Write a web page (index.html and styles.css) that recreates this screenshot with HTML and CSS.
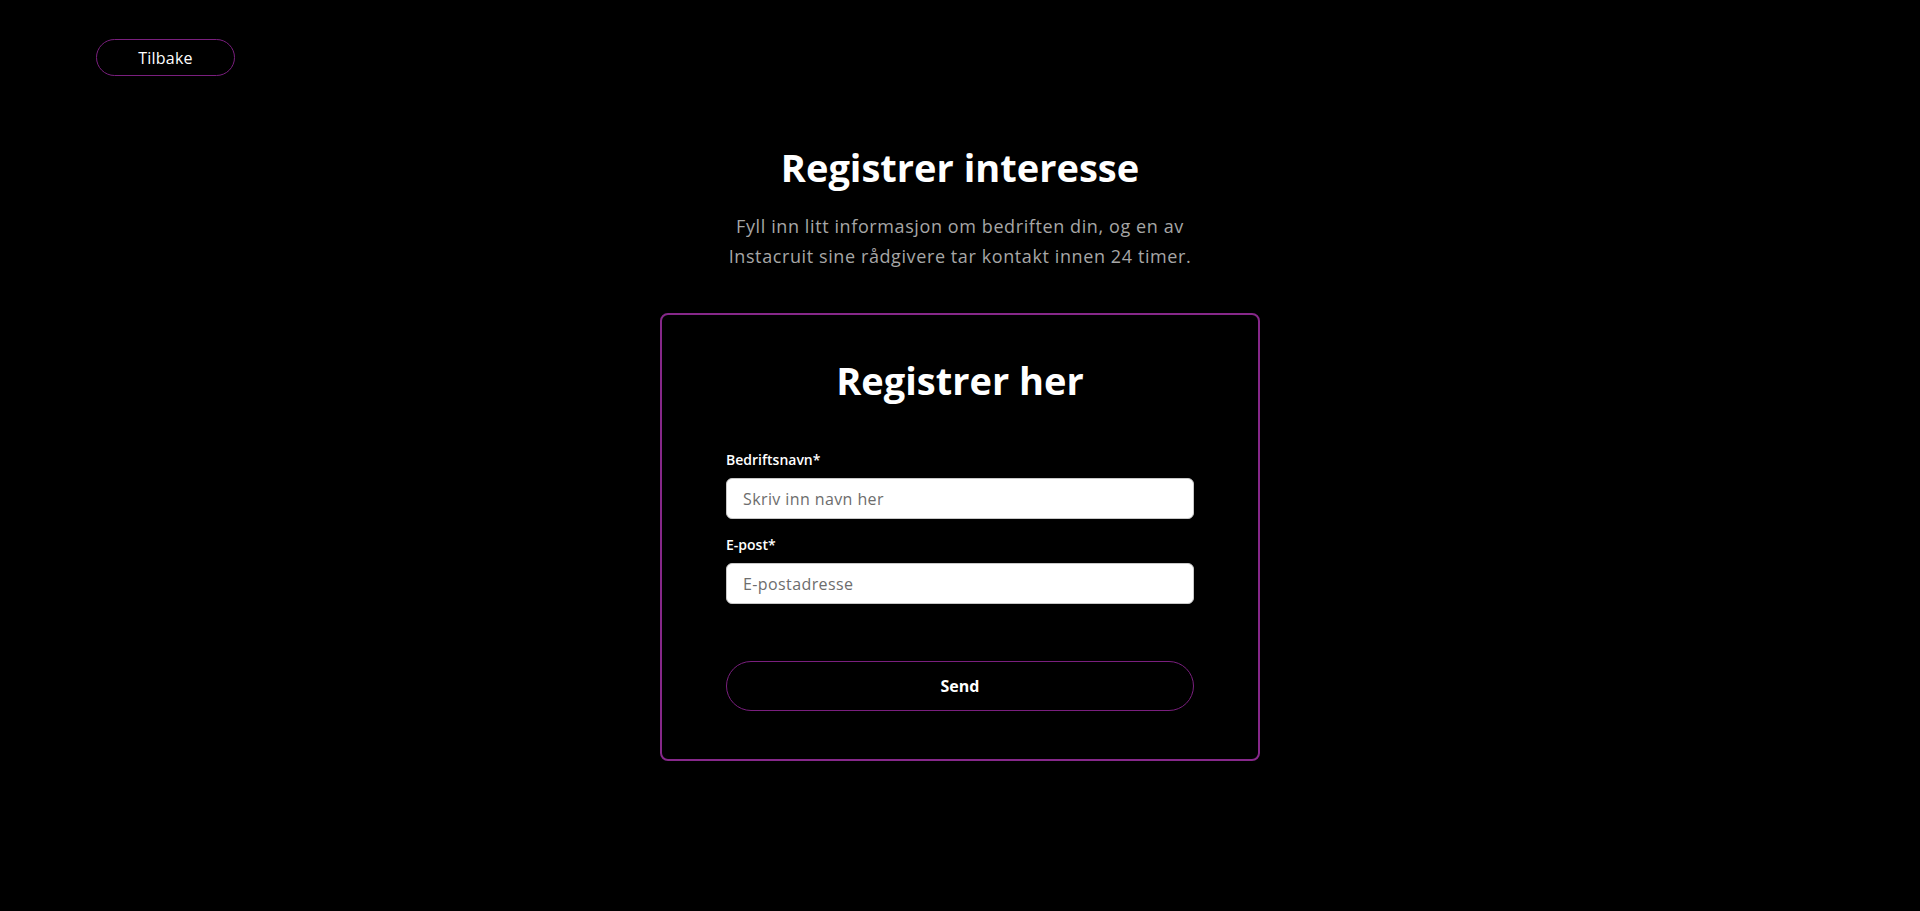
FILE: index.html
```html
<!DOCTYPE html>
<html lang="no">
<head>
  <meta charset="UTF-8">
  <title>Registrer interesse</title>
  <link rel="stylesheet" href="styles.css">
</head>
<body>
  <div class="topbar">
    <button class="back-btn" type="button">Tilbake</button>
  </div>

  <div class="intro">
    <h1>Registrer interesse</h1>
    <p>Fyll inn litt informasjon om bedriften din, og en av<br>Instacruit sine rådgivere tar kontakt innen 24 timer.</p>
  </div>

  <form class="card" onsubmit="return false;">
    <h2>Registrer her</h2>

    <label for="company">Bedriftsnavn*</label>
    <input type="text" id="company" placeholder="Skriv inn navn her">

    <label for="email" class="second">E-post*</label>
    <input type="email" id="email" placeholder="E-postadresse">

    <button class="send-btn" type="submit">Send</button>
  </form>
</body>
</html>
```

FILE: styles.css
```css
body {
  margin: 0;
  background-color: #000;
  color: #fff;
  font-family: "Open Sans", "Noto Sans", sans-serif;
}
.topbar {
  padding: 39px 0 0 96px;
}
.back-btn {
  width: 139px;
  height: 37px;
  border: 1px solid #7a1f7e;
  border-radius: 20px;
  background: #000;
  color: #fff;
  font-family: inherit;
  font-size: 16px;
  letter-spacing: 0.2px;
  cursor: pointer;
}
.intro {
  text-align: center;
}
.intro h1 {
  margin: 68px 0 0;
  font-size: 38px;
  line-height: 46px;
  font-weight: 700;
}
.intro p {
  margin: 21px 0 0;
  font-size: 18px;
  line-height: 30px;
  letter-spacing: 0.6px;
  color: #a6a6a6;
}
.card {
  box-sizing: border-box;
  width: 600px;
  margin: 42px auto 0;
  padding: 42px 64px 48px;
  border: 2px solid #86288a;
  border-radius: 8px;
  display: flex;
  flex-direction: column;
}
.card h2 {
  margin: 0 0 47px;
  text-align: center;
  font-size: 38px;
  line-height: 46px;
  font-weight: 700;
}
.card label {
  font-size: 14px;
  line-height: 20px;
  font-weight: 600;
  margin-bottom: 8px;
}
.card label.second {
  margin-top: 16px;
}
.card input {
  box-sizing: border-box;
  height: 41px;
  padding: 0 16px;
  border: 1px solid #c8c8c8;
  border-radius: 6px;
  font-family: inherit;
  font-size: 16px;
  letter-spacing: 0.4px;
  color: #333;
}
.card input::placeholder {
  color: #6d6d6d;
}
.send-btn {
  margin-top: 57px;
  height: 50px;
  border: 1px solid #7a1f7e;
  border-radius: 25px;
  background: #000;
  color: #fff;
  font-family: inherit;
  font-size: 16px;
  font-weight: 700;
  cursor: pointer;
}
```
